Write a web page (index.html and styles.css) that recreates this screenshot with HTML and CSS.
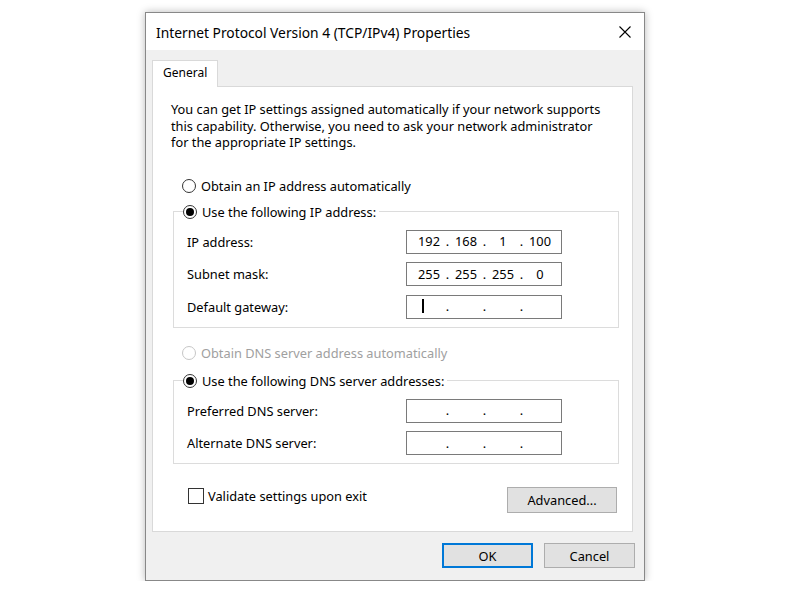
FILE: index.html
```html
<!DOCTYPE html>
<html lang="en">
<head>
    <meta charset="UTF-8">
    <title>Internet Protocol Version 4 (TCP/IPv4) Properties</title>
    <link rel="stylesheet" href="styles.css">
</head>
<body>
    <div class="window">
        <div class="titlebar">
            <span class="title">Internet Protocol Version 4 (TCP/IPv4) Properties</span>
            <svg class="close" width="12" height="12" viewBox="0 0 12 12">
                <path d="M0.5 0.5 L11.5 11.5 M11.5 0.5 L0.5 11.5" stroke="#000" stroke-width="1.1" fill="none"/>
            </svg>
        </div>

        <div class="body">
            <div class="tabs">
                <div class="tab">General</div>
            </div>

            <div class="panel">
                <p class="intro">You can get IP settings assigned automatically if your network supports<br>
                this capability. Otherwise, you need to ask your network administrator<br>
                for the appropriate IP settings.</p>

                <div class="radio-row first">
                    <span class="radio"></span>
                    <span>Obtain an IP address automatically</span>
                </div>

                <fieldset class="group ip-group">
                    <legend>
                        <span class="radio on"></span>
                        <span>Use the following IP address:</span>
                    </legend>
                    <div class="field">
                        <span>IP address:</span>
                        <div class="ipbox">
                            <span class="oct">192</span><span class="dot">.</span><span class="oct">168</span><span class="dot">.</span><span class="oct">1</span><span class="dot">.</span><span class="oct">100</span>
                        </div>
                    </div>
                    <div class="field">
                        <span>Subnet mask:</span>
                        <div class="ipbox">
                            <span class="oct">255</span><span class="dot">.</span><span class="oct">255</span><span class="dot">.</span><span class="oct">255</span><span class="dot">.</span><span class="oct">0</span>
                        </div>
                    </div>
                    <div class="field">
                        <span>Default gateway:</span>
                        <div class="ipbox">
                            <span class="oct"><i class="caret"></i></span><span class="dot">.</span><span class="oct"></span><span class="dot">.</span><span class="oct"></span><span class="dot">.</span><span class="oct"></span>
                        </div>
                    </div>
                </fieldset>

                <div class="radio-row disabled">
                    <span class="radio"></span>
                    <span>Obtain DNS server address automatically</span>
                </div>

                <fieldset class="group dns-group">
                    <legend>
                        <span class="radio on"></span>
                        <span>Use the following DNS server addresses:</span>
                    </legend>
                    <div class="field">
                        <span>Preferred DNS server:</span>
                        <div class="ipbox">
                            <span class="oct"></span><span class="dot">.</span><span class="oct"></span><span class="dot">.</span><span class="oct"></span><span class="dot">.</span><span class="oct"></span>
                        </div>
                    </div>
                    <div class="field">
                        <span>Alternate DNS server:</span>
                        <div class="ipbox">
                            <span class="oct"></span><span class="dot">.</span><span class="oct"></span><span class="dot">.</span><span class="oct"></span><span class="dot">.</span><span class="oct"></span>
                        </div>
                    </div>
                </fieldset>

                <div class="bottom-row">
                    <label class="check">
                        <span class="box"></span>
                        <span>Validate settings upon exit</span>
                    </label>
                    <button class="btn advanced">Advanced...</button>
                </div>
            </div>

            <div class="footer">
                <button class="btn default">OK</button>
                <button class="btn">Cancel</button>
            </div>
        </div>
    </div>
</body>
</html>
```

FILE: styles.css
```css
* {
    box-sizing: border-box;
}

body {
    margin: 0;
    background: #fff;
    font-family: "Noto Sans", "Open Sans", sans-serif;
    font-size: 12.8px;
    color: #000;
}

/* 대화상자 창 */
.window {
    width: 500px;
    height: 569px;
    margin: 12px 0 0 145px;
    border: 1px solid #888;
    background: #f0f0f0;
    box-shadow: 0 0 8px rgba(0, 0, 0, 0.28);
    display: flex;
    flex-direction: column;
}

.titlebar {
    height: 37px;
    background: #fff;
    display: flex;
    align-items: center;
    justify-content: space-between;
    padding: 1px 13px 0 10px;
}

.title {
    font-size: 13.8px;
}

.body {
    flex: 1;
    padding: 10px 11px 0 6px;
    display: flex;
    flex-direction: column;
}

/* 탭 */
.tabs {
    display: flex;
    height: 26px;
}

.tab {
    width: 66px;
    height: 27px;
    background: #fff;
    border: 1px solid #d9d9d9;
    border-bottom: none;
    padding: 3px 0 0 10px;
    font-size: 12px;
    position: relative;
    z-index: 1;
}

.panel {
    height: 446px;
    background: #fff;
    border: 1px solid #d9d9d9;
    padding: 14px 13px 0 18px;
}

.intro {
    margin: 0;
    line-height: 16.5px;
}

/* 라디오 버튼 */
.radio-row {
    display: flex;
    align-items: center;
    height: 16px;
    margin-left: 11px;
}

.radio-row.first {
    margin-top: 27px;
}

.radio-row.disabled {
    margin-top: 17px;
    color: #a0a0a0;
}

.radio {
    width: 14px;
    height: 14px;
    border: 1px solid #333;
    border-radius: 50%;
    margin-right: 5px;
    display: flex;
    align-items: center;
    justify-content: center;
    background: #fff;
}

.radio.on::after {
    content: "";
    width: 8px;
    height: 8px;
    border-radius: 50%;
    background: #000;
}

.disabled .radio {
    border-color: #c6c6c6;
}

/* 그룹박스 */
.group {
    margin: 10px 0 0 2px;
    border: 1px solid #dcdcdc;
    padding: 0 0 8px 13px;
    width: 446px;
}

.group legend {
    display: flex;
    align-items: center;
    height: 16px;
    padding: 0 3px 0 0;
    margin-left: -4px;
}

.dns-group {
    margin-top: 12px;
}

.field {
    display: grid;
    grid-template-columns: 219px 156px;
    align-items: center;
    margin-top: 8.5px;
}

.ip-group .field:first-of-type,
.dns-group .field:first-of-type {
    margin-top: 10px;
}

.ipbox {
    height: 24px;
    border: 1px solid #7a7a7a;
    background: #fff;
    display: flex;
    align-items: center;
    padding-left: 7px;
}

.oct {
    width: 30px;
    text-align: center;
    position: relative;
    height: 17px;
    line-height: 17px;
}

.dot {
    width: 7px;
    text-align: center;
    height: 17px;
    line-height: 17px;
}

.caret {
    display: inline-block;
    width: 2px;
    height: 14px;
    background: #000;
    vertical-align: -2px;
    margin-left: -12px;
}

/* 아래쪽 */
.bottom-row {
    display: flex;
    justify-content: space-between;
    align-items: flex-start;
    margin-top: 23px;
    padding-left: 17px;
    width: 446px;
}

.check {
    display: flex;
    align-items: center;
}

.box {
    width: 16px;
    height: 16px;
    border: 1px solid #333;
    background: #fff;
    margin-right: 4px;
}

.btn {
    font: inherit;
    color: #000;
    background: #e1e1e1;
    border: 1px solid #adadad;
    height: 26px;
    padding: 0;
}

.advanced {
    width: 110px;
}

.footer {
    display: flex;
    justify-content: flex-end;
    gap: 11px;
    margin: 11px -2px 0 0;
}

.footer .btn {
    width: 91px;
    height: 25px;
}

.btn.default {
    border: 2px solid #0078d7;
}
```
